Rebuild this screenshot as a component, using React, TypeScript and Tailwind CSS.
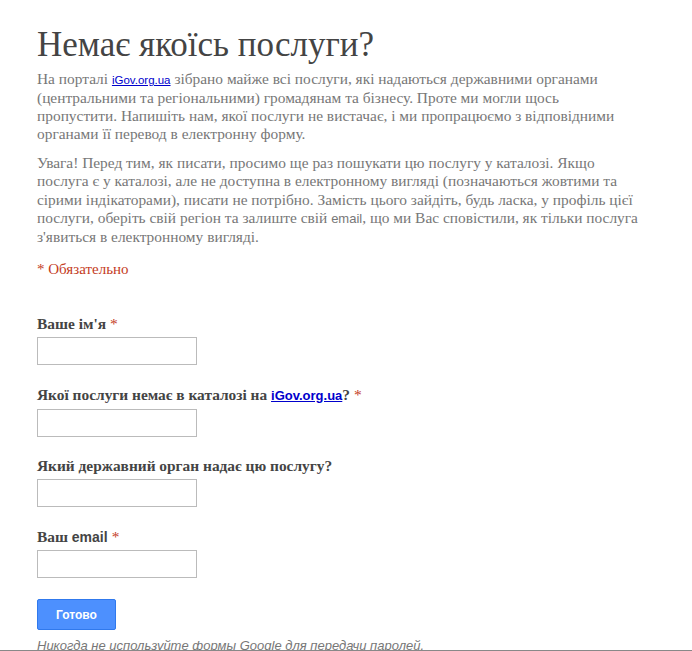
const serif = { fontFamily: '"Liberation Serif", "DejaVu Serif", serif' };

function Field({ label, required }: { label: React.ReactNode; required?: boolean }) {
  return (
    <div className="mb-[20.5px]">
      <div className="text-[15.4px] font-bold leading-[18px] text-[#444]">
        {label}
        {required && <span className="ml-1 font-normal text-[#c43b1d]">*</span>}
      </div>
      <input
        type="text"
        className="mt-[4px] block h-[28px] w-[160px] border border-[#bbb] bg-white px-1 outline-none"
      />
    </div>
  );
}

export default function App() {
  return (
    <main className="h-[651px] overflow-hidden border-b border-[#888] bg-white" style={serif}>
      <div className="pl-[37px] pt-[25px]">
        <h1 className="text-[35px] font-normal leading-[40px] text-[#444]">Немає якоїсь послуги?</h1>

        <p className="mt-[5px] text-[15.4px] leading-[18px] text-[#777]">
          На порталі{' '}
          <a href="#" className="font-['Liberation_Sans',sans-serif] text-[11.5px] text-[#0000cc] underline">
            iGov.org.ua
          </a>{' '}
          зібрано майже всі послуги, які надаються державними органами
          <br />
          (центральними та регіональними) громадянам та бізнесу. Проте ми могли щось
          <br />
          пропустити. Напишіть нам, якої послуги не вистачає, і ми пропрацюємо з відповідними
          <br />
          органами її перевод в електронну форму.
        </p>

        <p className="mt-[11px] text-[15.4px] leading-[18.3px] text-[#777]">
          Увага! Перед тим, як писати, просимо ще раз пошукати цю послугу у каталозі. Якщо
          <br />
          послуга є у каталозі, але не доступна в електронному вигляді (позначаються жовтими та
          <br />
          сірими індікаторами), писати не потрібно. Замість цього зайдіть, будь ласка, у профіль цієї
          <br />
          послуги, оберіть свій регіон та залиште свій{' '}
          <span className="font-['Liberation_Sans',sans-serif] text-[13px]">email</span>, що ми Вас сповістили, як тільки послуга
          <br />
          з'явиться в електронному вигляді.
        </p>

        <p className="mt-[14px] text-[15px] leading-[18px] text-[#c43b1d]">* Обязательно</p>

        <div className="mt-[37px]">
          <Field label="Ваше ім'я" required />
          <Field
            required
            label={
              <>
                Якої послуги немає в каталозі на{' '}
                <a href="#" className="font-['Liberation_Sans',sans-serif] text-[13px] text-[#0000cc] underline">
                  iGov.org.ua
                </a>
                ?
              </>
            }
          />
          <Field label="Який державний орган надає цю послугу?" />
          <Field
            required
            label={
              <>
                Ваш <span className="font-['Liberation_Sans',sans-serif] text-[14px]">email</span>
              </>
            }
          />
        </div>

        <button className="mt-[1px] h-[31px] w-[79px] rounded-[2px] border border-[#3079ed] bg-[#4d90fe] font-['Liberation_Sans',sans-serif] text-[12px] font-bold text-white">
          Готово
        </button>

        <p className="mt-[7px] font-['Liberation_Sans',sans-serif] text-[13px] italic leading-[18px] text-[#777]">
          Никогда не используйте формы Google для передачи паролей.
        </p>
      </div>
    </main>
  );
}
